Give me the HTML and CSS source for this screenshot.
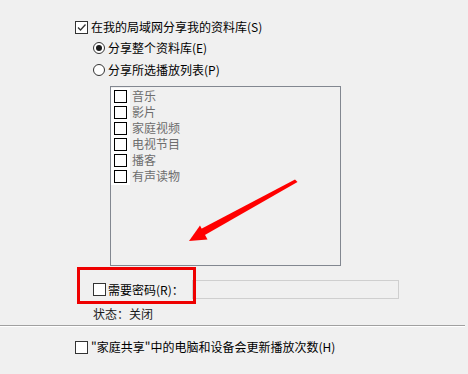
FILE: index.html
```html
<!DOCTYPE html>
<html lang="zh-CN">
<head>
    <meta charset="UTF-8">
    <title>媒体共享</title>
    <link rel="stylesheet" href="styles.css">
</head>
<body>
    <div class="panel">
        <!-- share library -->
        <div class="row row-main">
            <span class="chk checked">
                <svg viewBox="0 0 11 11" width="11" height="11"><path d="M2 5.5 L4.5 8 L9.5 2.5" fill="none" stroke="#333" stroke-width="1.3"/></svg>
            </span>
            <span>在我的局域网分享我的资料库(S)</span>
        </div>
        <div class="row row-radio first-radio">
            <span class="radio on"></span>
            <span>分享整个资料库(E)</span>
        </div>
        <div class="row row-radio second-radio">
            <span class="radio"></span>
            <span>分享所选播放列表(P)</span>
        </div>

        <div class="listbox">
            <div class="list-item"><span class="chk"></span><span class="item-text">音乐</span></div>
            <div class="list-item"><span class="chk"></span><span class="item-text">影片</span></div>
            <div class="list-item"><span class="chk"></span><span class="item-text">家庭视频</span></div>
            <div class="list-item"><span class="chk"></span><span class="item-text">电视节目</span></div>
            <div class="list-item"><span class="chk"></span><span class="item-text">播客</span></div>
            <div class="list-item"><span class="chk"></span><span class="item-text">有声读物</span></div>
        </div>

        <div class="row row-password">
            <span class="chk dark"></span>
            <span class="pw-label">需要密码(R)：</span>
            <span class="pw-input"></span>
        </div>
        <div class="row row-status">状态：关闭</div>
    </div>

    <div class="separator"></div>

    <div class="row row-bottom">
        <span class="chk dark"></span>
        <span>"家庭共享"中的电脑和设备会更新播放次数(H)</span>
    </div>

    <!-- annotation layer -->
    <div class="mark-box"></div>
    <svg class="arrow" width="468" height="374" viewBox="0 0 468 374">
        <polygon points="295,179.5 297.5,182 204,235.5 199,230" fill="#ff0000"/>
        <polygon points="189,241 200,225.5 207.5,239.5" fill="#ff0000"/>
    </svg>
</body>
</html>
```

FILE: styles.css
```css
/* Media sharing dialog */
body {
    margin: 0;
    width: 468px;
    height: 374px;
    background-color: #f0f0f0;
    font-family: "Noto Sans CJK SC", "Microsoft YaHei", sans-serif;
    font-size: 12px;
    color: #000;
    position: relative;
    overflow: hidden;
}

.panel {
    padding-top: 19px;
}

.row {
    display: flex;
    align-items: center;
    height: 16px;
    line-height: 16px;
    white-space: nowrap;
}

.row-main {
    padding-left: 75px;
}

.row-main .chk {
    margin-right: 3px;
}

.row-radio {
    padding-left: 93px;
}

.first-radio {
    margin-top: 5px;
}

.second-radio {
    margin-top: 6px;
}

/* checkbox */
.chk {
    box-sizing: border-box;
    width: 13px;
    height: 13px;
    border: 1px solid #000;
    background-color: #fff;
    display: flex;
    align-items: center;
    justify-content: center;
    flex-shrink: 0;
}

.chk.checked,
.chk.dark {
    border-color: #333;
}

/* radio */
.radio {
    box-sizing: border-box;
    width: 12px;
    height: 12px;
    border: 1px solid #333;
    border-radius: 50%;
    background-color: #fff;
    margin-right: 3px;
    position: relative;
    flex-shrink: 0;
}

.radio.on::after {
    content: "";
    position: absolute;
    left: 2px;
    top: 2px;
    width: 6px;
    height: 6px;
    border-radius: 50%;
    background-color: #1a1a1a;
}

/* playlist list */
.listbox {
    box-sizing: border-box;
    margin: 8px 0 0 110px;
    width: 231px;
    height: 180px;
    border: 1px solid #828790;
    padding-top: 1px;
}

.list-item {
    display: flex;
    align-items: center;
    height: 16px;
    line-height: 16px;
}

.list-item .chk {
    margin-left: 3px;
    border-width: 1px;
    border-color: #000;
    box-shadow: -3px 0 0 #fff, 3px 0 0 #fff, -3px -2px 0 #fff, 3px -2px 0 #fff, -3px 2px 0 #fff, 3px 2px 0 #fff;
}

.item-text {
    margin-left: 5px;
    color: #6d6d6d;
}

/* password */
.row-password {
    margin-top: 14px;
    height: 19px;
    padding-left: 93px;
}

.pw-label {
    margin-left: 2px;
}

.pw-input {
    box-sizing: border-box;
    width: 207px;
    height: 19px;
    margin-left: 8px;
    border: 1px solid #cfcfcf;
    background-color: #f0f0f0;
}

.row-status {
    margin-top: 7px;
    padding-left: 93px;
    color: #1a1a1a;
}

.separator {
    margin-top: 3px;
    width: 465px;
    height: 1px;
    background-color: #a0a0a0;
    border-bottom: 1px solid #fff;
}

.row-bottom {
    margin-top: 12px;
    padding-left: 75px;
}

.row-bottom .chk {
    margin-right: 3px;
}

/* red annotations */
.mark-box {
    position: absolute;
    left: 77px;
    top: 267px;
    width: 119px;
    height: 37px;
    box-sizing: border-box;
    border: 3px solid #ee0000;
}

.arrow {
    position: absolute;
    left: 0;
    top: 0;
    pointer-events: none;
}
```
